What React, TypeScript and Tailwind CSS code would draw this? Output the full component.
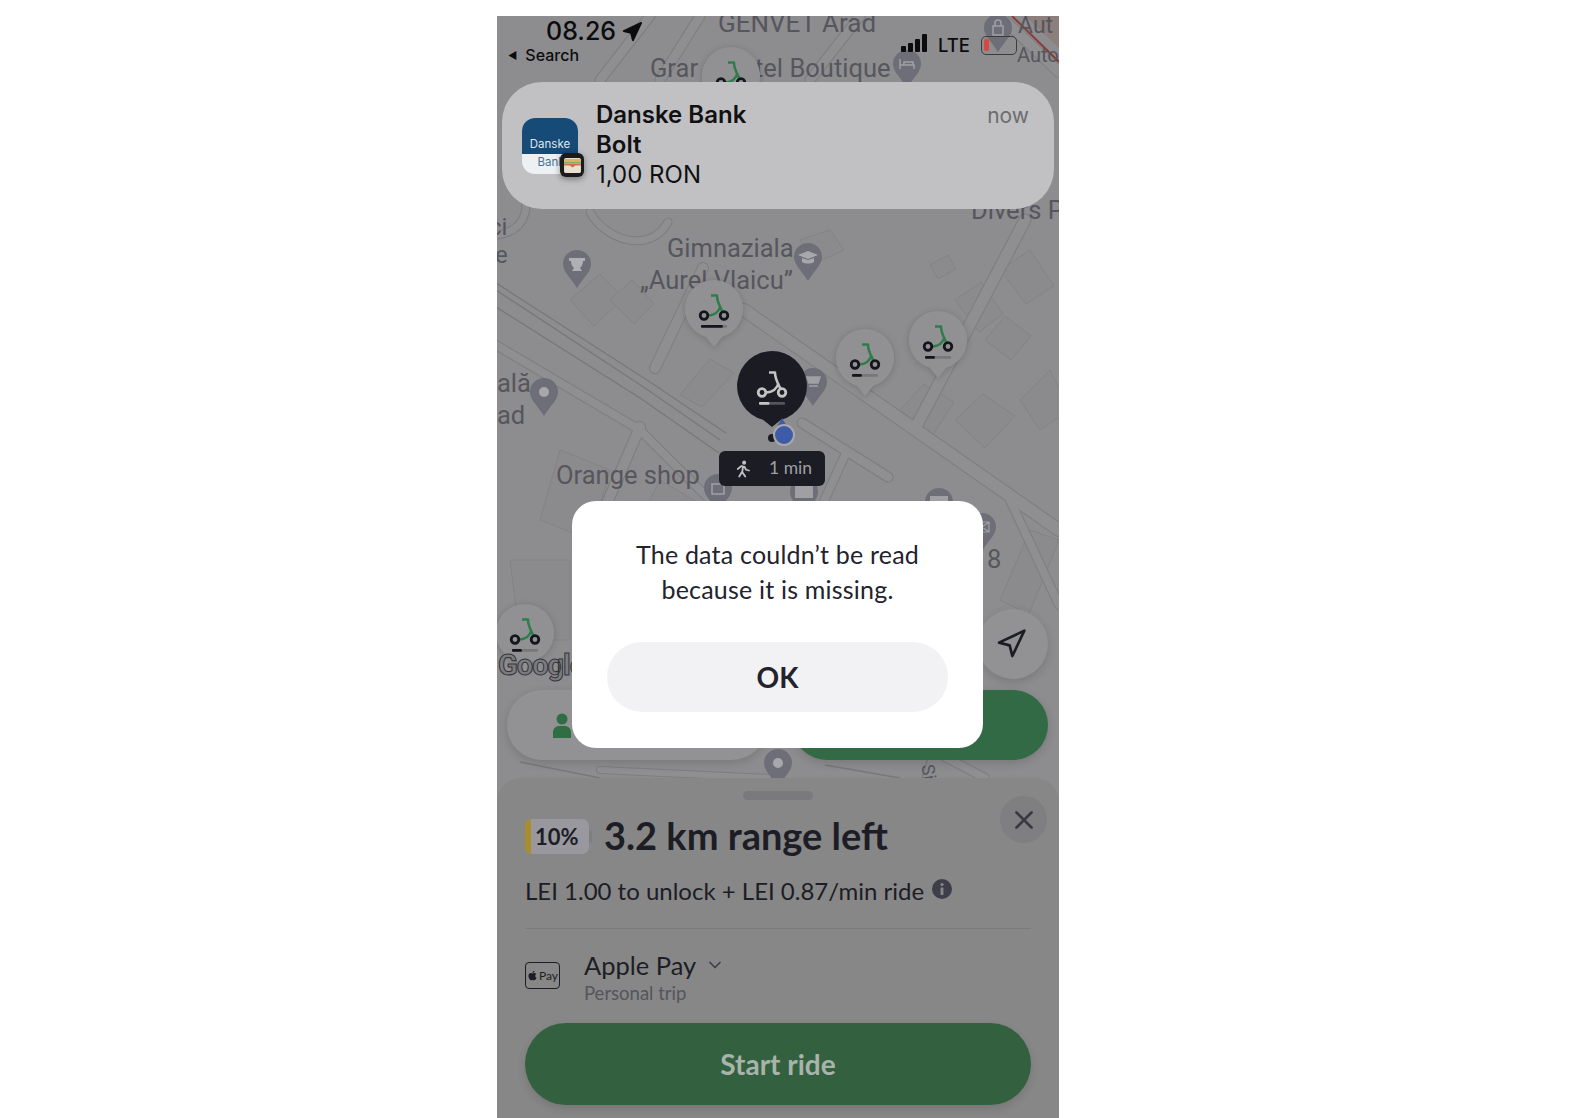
import { Navigation, X, ChevronDown } from "lucide-react";
import { FaApple } from "react-icons/fa";

function Scooter({ dark, level }: { dark?: boolean; level: number }) {
  const ring = dark ? "#c4c4c4" : "#15151c";
  const stem = dark ? "#c4c4c4" : "#2f7d4a";
  return (
    <svg viewBox="0 0 58 58" className="h-full w-full" fill="none">
      <path d="M26 15.500h6c0 7 3 11 6 17M35.500 26c-1.500 6-6 9-12 9.500" stroke={stem} strokeWidth="2.500" strokeLinejoin="round" />
      <circle cx="19" cy="35.500" r="3.800" stroke={ring} strokeWidth="2.800" />
      <circle cx="39" cy="35.500" r="3.800" stroke={ring} strokeWidth="2.800" />
      <rect x="16" y="45" width="26" height="2.800" rx="1" fill={dark ? "#55555b" : "#77777a"} />
      <rect x="16" y="45" width={26 * level} height="2.800" rx="1" fill={dark ? "#c4c4c4" : "#15151c"} />
    </svg>
  );
}

function ScooterPin({ className, level }: { className: string; level: number }) {
  return (
    <div className={`absolute h-[67px] w-[58px] ${className}`}>
      <svg viewBox="0 0 58 67" className="absolute inset-0 drop-shadow-[0_1px_3px_rgba(0,0,0,0.18)]">
        <path d="M29 0a29 29 0 0 1 8 56.900L29 67l-8-10.100A29 29 0 0 1 29 0z" fill="#919193" />
      </svg>
      <div className="absolute left-0 top-0 h-[58px] w-[58px]">
        <Scooter level={level} />
      </div>
    </div>
  );
}

function Poi({ className, children }: { className: string; children?: React.ReactNode }) {
  return (
    <svg viewBox="0 0 28 38" className={`absolute h-[38px] w-[28px] ${className}`}>
      <path d="M14 0a14 14 0 0 1 14 14c0 8-8 14-14 24C8 28 0 22 0 14A14 14 0 0 1 14 0z" fill="#6e6e78" />
      {children}
    </svg>
  );
}

const wideRoads = [
  { d: "M744 310 L1059 530", w: 12 },
  { d: "M802 423 L888 477", w: 9 },
  { d: "M1025 220 L917 425", w: 11 },
  { d: "M703 268 L655 368", w: 10 },
  { d: "M640 427 L604 510", w: 10 },
  { d: "M845 455 L820 510", w: 8 },
  { d: "M1059 605 L1010 500", w: 8 },
  { d: "M496 345 L640 430 L720 510", w: 8 },
  { d: "M660 80 L700 16", w: 9 },
  { d: "M810 80 L860 16", w: 9 },
  { d: "M600 80 L650 16", w: 9 },
  { d: "M1000 16 L1059 72", w: 10 },
  { d: "M497 235 C530 230 530 200 520 190", w: 7 },
  { d: "M590 212 C605 240 650 255 668 222", w: 7 },
  { d: "M600 770 L770 778", w: 6 },
  { d: "M860 712 L985 778", w: 8 },
];

const thinRoads = [
  "M496 283 L647 380 L726 433",
  "M496 290 L645 388 L720 440",
  "M496 307 L640 398 L719 453",
  "M932 744 L922 778",
  "M520 762 L600 778",
  "M825 765 L900 778",
];

const blocks = [
  "M570 300l30-26 24 24-30 28z",
  "M610 300l22-20 22 24-20 20z",
  "M800 240l30-10 14 20-30 14z",
  "M930 265l18-10 8 14-18 10z",
  "M955 300l26-18 22 32-24 18z",
  "M1000 270l30-20 24 36-28 18z",
  "M900 410l24-26 30 18-22 34z",
  "M955 420l28-26 32 22-30 32z",
  "M985 340l20-24 26 20-20 24z",
  "M1020 400l30-30 20 40-30 20z",
  "M680 395l30-36 24 14-32 34z",
  "M560 450l-20 70 50 20 20-70z",
  "M640 520l20-40 40 24-20 30z",
  "M920 500l50 30-14 24-50-30z",
  "M1000 600l30-70 29 10-30 74z",
  "M510 560l60 0 0 80-50 0z",
];

function MapLayer() {
  return (
    <div className="absolute inset-0 overflow-hidden bg-[#8d8d8f]">
      <svg viewBox="497 16 562 800" className="absolute left-0 top-0 h-[800px] w-[562px]" fill="none">
        {blocks.map((d, i) => (
          <path key={i} d={d} stroke="#838386" strokeWidth="1" fill="#8b8b8d" />
        ))}
        {wideRoads.map((r, i) => (
          <path key={i} d={r.d} stroke="#7d7d80" strokeWidth={r.w + 2} strokeLinecap="round" strokeLinejoin="round" />
        ))}
        {wideRoads.map((r, i) => (
          <path key={i} d={r.d} stroke="#8f8f91" strokeWidth={r.w} strokeLinecap="round" strokeLinejoin="round" />
        ))}
        {thinRoads.map((d, i) => (
          <path key={i} d={d} stroke="#78787b" strokeWidth="1.300" />
        ))}
        <path d="M1025 16 L1059 16 L1059 48z" fill="#8d7f7e" />
        <path d="M1012 16 L1059 62" stroke="#8a3a3c" strokeWidth="2" />
      </svg>

      {/* labels */}
      <div className="absolute inset-0 whitespace-nowrap text-[#56565c] [font-family:Roboto,sans-serif] text-[25.500px] leading-[30px]">
        <span className="absolute left-[221px] top-[-8px] text-[26px]">GENVET Arad</span>
        <span className="absolute left-[153px] top-[37px]">Grar</span>
        <span className="absolute left-[258px] top-[37px]">tel Boutique</span>
        <span className="absolute left-[521px] top-[-5px] text-[23px]">Aut</span>
        <span className="absolute left-[520px] top-[24px] text-[20px]">Auto</span>
        <span className="absolute left-[474px] top-[179px]">Divers P</span>
        <span className="absolute left-[-8px] top-[196px] text-[24px]">ci</span>
        <span className="absolute left-[-2px] top-[224px] text-[24px]">e</span>
        <span className="absolute left-[170px] top-[217px]">Gimnaziala</span>
        <span className="absolute left-[143px] top-[249px]">„Aurel Vlaicu”</span>
        <span className="absolute left-[0px] top-[352px]">ală</span>
        <span className="absolute left-[0px] top-[384px]">ad</span>
        <span className="absolute left-[59px] top-[444px]">Orange shop</span>
        <span className="absolute left-[490px] top-[528px]">8</span>
        <span className="absolute left-[424px] top-[741px] rotate-[80deg] text-[18px]">Si</span>
      </div>

      {/* place markers */}
      <Poi className="left-[396px] top-[34px]">
        <path d="M7 9v10M7 15h14v4M11 12h9v3H11z" stroke="#a0a0a4" strokeWidth="1.500" fill="none" />
      </Poi>
      <Poi className="left-[487px] top-[-2px]">
        <path d="M9 12h10v9H9zM11 12V9a3 3 0 0 1 6 0v3" stroke="#a0a0a4" strokeWidth="1.500" fill="none" />
      </Poi>
      <Poi className="left-[66px] top-[234px]">
        <path d="M6 8h16v3h-2c0 4-2 6-3 7l2 3H9l2-3c-1-1-3-3-3-7H6z" fill="#b0b0b4" />
      </Poi>
      <Poi className="left-[297px] top-[227px]">
        <path d="M14 8l10 4-10 4-10-4z" fill="#a8a8ac" />
        <path d="M8 15v4c3 2 9 2 12 0v-4l-6 2z" fill="#a8a8ac" />
      </Poi>
      <Poi className="left-[33px] top-[362px]">
        <circle cx="14" cy="14" r="5" fill="#a8a8ac" />
      </Poi>
      <Poi className="left-[302px] top-[352px]">
        <path d="M8 9h13l-2 6H10zM10 18h9" stroke="#a0a0a4" strokeWidth="1.500" fill="#a0a0a4" />
      </Poi>
      <Poi className="left-[207px] top-[458px]">
        <path d="M8 10h12v10H8z" stroke="#a0a0a4" strokeWidth="1.500" fill="none" />
      </Poi>
      <Poi className="left-[293px] top-[462px]">
        <rect x="5" y="8" width="18" height="12" fill="#a0a0a4" />
      </Poi>
      <Poi className="left-[428px] top-[472px]">
        <rect x="5" y="8" width="18" height="12" fill="#a0a0a4" />
      </Poi>
      <Poi className="left-[471px] top-[497px]">
        <path d="M7 9h14v10H7zM7 9l14 10M21 9L7 19" stroke="#a0a0a4" strokeWidth="1.200" fill="none" />
      </Poi>
      <Poi className="left-[267px] top-[733px]">
        <circle cx="14" cy="14" r="5" fill="#a8a8ac" />
      </Poi>

      <ScooterPin className="left-[188px] top-[264px]" level={0.84} />
      <ScooterPin className="left-[339px] top-[313px]" level={0.38} />
      <ScooterPin className="left-[412px] top-[295px]" level={0.38} />
      <ScooterPin className="left-[-1px] top-[588px]" level={0.38} />
      <ScooterPin className="left-[205px] top-[31px]" level={0.38} />

      {/* selected scooter */}
      <div className="absolute left-[240px] top-[335px] h-[76px] w-[70px]">
        <svg viewBox="0 0 70 76" className="absolute inset-0">
          <path d="M35 0a35 35 0 0 1 9 68.800L35 76l-9-7.200A35 35 0 0 1 35 0z" fill="#1b1b23" />
        </svg>
        <div className="absolute left-[6px] top-[6px] h-[58px] w-[58px]">
          <Scooter dark level={0.4} />
        </div>
      </div>

      {/* current location */}
      <div className="absolute left-[271px] top-[418px] h-[8px] w-[8px] rounded-full bg-[#1b1b23]" />
      <svg viewBox="0 0 14 12" className="absolute left-[278px] top-[402px] h-[12px] w-[14px]">
        <path d="M7 0l7 12H0z" fill="#3d5ba6" />
      </svg>
      <div className="absolute left-[276px] top-[408px] h-[22px] w-[22px] rounded-full border-2 border-[#a9a9ac] bg-[#3d5ba6]" />

      {/* walking time */}
      <div className="absolute left-[222px] top-[435px] flex h-[35px] w-[106px] items-center gap-[17px] rounded-[6px] bg-[#1c1c24] pl-[15px] text-[17.500px] text-[#a0a0a4] [font-family:Lato,sans-serif]">
        <svg viewBox="0 0 24 24" className="h-[22px] w-[18px]" fill="none" stroke="#c0c0c3" strokeWidth="2.400" strokeLinecap="round" strokeLinejoin="round">
          <circle cx="13.500" cy="3.500" r="1.500" fill="#c0c0c3" />
          <path d="M5 12l5-4 4 1 2 4 4 1M12 9l-1 7 4 6M10.500 16L7 22" />
        </svg>
        <span>1 min</span>
      </div>

      {/* map controls */}
      <span className="absolute left-[1px] top-[632px] text-[29px] font-bold leading-[34px] tracking-[-1px] text-[#7c7c7e] [font-family:Roboto,sans-serif] [-webkit-text-stroke:1px_#34343a]">
        Google
      </span>
      <div className="absolute left-[481px] top-[593px] flex h-[70px] w-[70px] items-center justify-center rounded-full bg-[#929294] shadow-[0_3px_10px_rgba(0,0,0,0.15)]">
        <Navigation className="mr-[4px] h-[32px] w-[32px] text-[#1c1c24]" strokeWidth={2} />
      </div>
      <div className="absolute left-[10px] top-[674px] flex h-[70px] w-[260px] items-center rounded-full bg-[#929294] pl-[46px] shadow-[0_3px_10px_rgba(0,0,0,0.15)]">
        <svg viewBox="0 0 24 25" className="h-[25px] w-[24px]" fill="#2f6d42">
          <circle cx="9" cy="6" r="5.500" />
          <path d="M0 25v-6a6 6 0 0 1 6-6h6a6 6 0 0 1 6 6v6z" />
        </svg>
      </div>
      <div className="absolute left-[295px] top-[674px] h-[70px] w-[256px] rounded-full bg-[#336a46] shadow-[0_3px_10px_rgba(0,0,0,0.15)]" />
    </div>
  );
}

function Notification() {
  return (
    <div className="absolute left-[5px] top-[66px] flex h-[127px] w-[552px] rounded-[40px] bg-[#c1c1c3] pl-[20px] pr-[25px] text-[#111114] [font-family:Inter,sans-serif]">
      <div className="relative mt-[36px] h-[56px] w-[56px] shrink-0">
        <div className="flex h-full w-full flex-col overflow-hidden rounded-[13px] bg-[#eef1f4] text-center">
          <div className="flex h-[36px] items-end justify-center bg-[#164a77] pb-[2px] text-[11.500px] leading-[15px] text-[#dfe8ef]">Danske</div>
          <div className="pl-[2px] pt-[1px] text-[11.500px] leading-[15px] text-[#4a7396]">Bank</div>
        </div>
        <div className="absolute left-[38px] top-[35px] flex h-[24px] w-[24px] items-center justify-center rounded-[6px] bg-[#1b1b1d] shadow-[0_2px_6px_rgba(0,0,0,0.4)]">
          <svg viewBox="0 0 18 16" className="h-[15px] w-[17px]">
            <rect width="18" height="16" rx="2" fill="#e9e0d2" />
            <rect width="18" height="3" y="1" fill="#d9b45a" />
            <rect width="18" height="2" y="4" fill="#7fb069" />
            <path d="M0 6h18v2h-6l-3 2-3-2H0z" fill="#d96b55" />
          </svg>
        </div>
      </div>
      <div className="ml-[18px] flex-1 pt-[18px] text-[24px] leading-[30px]">
        <div className="font-semibold">Danske Bank</div>
        <div className="font-semibold">Bolt</div>
        <div>1,00 RON</div>
      </div>
      <div className="pt-[20px] text-[21px] leading-[28px] text-[#6c6c6f]">now</div>
    </div>
  );
}

function StatusBar() {
  return (
    <div className="absolute inset-x-0 top-0 flex items-start justify-between pl-[11px] pr-[42px] text-[#0c0c0e] [font-family:Inter,sans-serif]">
      <div className="flex flex-col gap-[2px]">
        <div className="ml-[38px] flex h-[26px] items-center gap-[5px] pt-[6px] text-[25px] font-medium">
          <span>08.26</span>
          <Navigation className="h-[22px] w-[22px] fill-[#0c0c0e]" />
        </div>
        <div className="flex h-[22px] items-center gap-[8px] text-[16px] font-medium">
          <span className="text-[10px]">◀</span>
          <span>Search</span>
        </div>
      </div>
      <div className="mt-[17px] flex items-center">
        <div className="-mt-[4px] flex h-[18px] items-end gap-[2px]">
          <div className="h-[6px] w-[5px] rounded-[1px] bg-[#0c0c0e]" />
          <div className="h-[9px] w-[5px] rounded-[1px] bg-[#0c0c0e]" />
          <div className="h-[13px] w-[5px] rounded-[1px] bg-[#0c0c0e]" />
          <div className="h-[18px] w-[5px] rounded-[1px] bg-[#0c0c0e]" />
        </div>
        <span className="ml-[11px] text-[18.500px] font-medium leading-[24px]">LTE</span>
        <div className="ml-[11px] flex h-[19px] w-[36px] items-center rounded-[5px] border border-[#3c3c40] px-[2px]">
          <div className="h-[12px] w-[5px] rounded-[2px] bg-[#d9483f]" />
        </div>
      </div>
    </div>
  );
}

function Dialog() {
  return (
    <div className="absolute left-[75px] top-[485px] flex h-[247px] w-[411px] flex-col items-center rounded-[24px] bg-white px-[35px] pt-[36px] text-[#23232d] [font-family:Lato,sans-serif]">
      <p className="text-center text-[25px] leading-[35px] tracking-[0.2px]">
        The data couldn’t be read
        <br />
        because it is missing.
      </p>
      <button className="mt-[35px] h-[70px] w-full rounded-full bg-[#f2f2f4] text-[28px] font-bold">OK</button>
    </div>
  );
}

function BottomSheet() {
  return (
    <div className="relative flex h-[340px] flex-col rounded-t-[24px] bg-[#878787] px-[28px] text-[#1d1d25] [font-family:Lato,sans-serif]">
      <div className="mx-auto mt-[13px] h-[9px] w-[70px] rounded-full bg-[#7a7a7c]" />
      <div className="absolute right-[12px] top-[18px] flex h-[47px] w-[47px] items-center justify-center rounded-full bg-[#7f7f81]">
        <X className="h-[30px] w-[30px] text-[#3a3a42]" strokeWidth={2.2} />
      </div>

      <div className="mt-[15px] flex items-center gap-[12px]">
        <div className="flex items-center">
          <div className="relative flex h-[35px] w-[64px] items-center overflow-hidden rounded-[7px] bg-[#98989e] pl-[10px] text-[22px] font-bold">
            <div className="absolute inset-y-0 left-0 w-[6px] bg-[#a98f2c]" />
            10%
          </div>
          <div className="h-[13px] w-[3px] rounded-r bg-[#7e7e82]" />
        </div>
        <h1 className="-mt-[2px] text-[38px] font-bold leading-[44px]">3.2 km range left</h1>
      </div>

      <div className="mt-[18px] flex items-start gap-[8px]">
        <span className="text-[24px] leading-[32px]">LEI 1.00 to unlock + LEI 0.87/min ride</span>
        <svg viewBox="0 0 20 20" className="mt-[4px] h-[20px] w-[20px]">
          <circle cx="10" cy="10" r="10" fill="#3e3e4a" />
          <circle cx="10" cy="5.500" r="1.600" fill="#878787" />
          <rect x="8.600" y="8.500" width="2.800" height="7.500" rx="0.500" fill="#878787" />
        </svg>
      </div>

      <div className="mt-[21px] h-px bg-[#7b7b7d]" />

      <div className="mt-[19px] flex items-center">
        <div className="-mt-[2px] flex h-[27px] w-[35px] items-center justify-center gap-[1px] rounded-[4px] border border-[#1d1d25] text-[12px]">
          <FaApple className="h-[11px] w-[11px]" />
          <span>Pay</span>
        </div>
        <div className="ml-[24px]">
          <div className="flex items-center gap-[9px] text-[25.500px] leading-[34px]">
            Apple Pay
            <ChevronDown className="h-[20px] w-[20px] text-[#3e3e46]" />
          </div>
          <div className="text-[18.500px] leading-[23px] text-[#55555b]">Personal trip</div>
        </div>
      </div>

      <button className="mt-[18px] h-[82px] rounded-full bg-[#33613f] text-[28px] font-bold text-[#a8b4ab] shadow-[0_4px_8px_rgba(0,0,0,0.12)]">
        Start ride
      </button>
    </div>
  );
}

export default function App() {
  return (
    <div className="h-[1118px] overflow-hidden bg-white pl-[497px] pt-[16px]">
      <div className="relative flex h-[1102px] w-[562px] flex-col justify-end overflow-hidden">
        <MapLayer />
        <StatusBar />
        <Notification />
        <BottomSheet />
        <Dialog />
      </div>
    </div>
  );
}
